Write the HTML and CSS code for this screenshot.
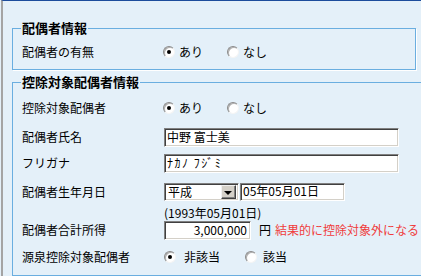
FILE: index.html
```html
<!DOCTYPE html>
<html lang="ja">
<head>
<meta charset="utf-8">
<link rel="stylesheet" href="styles.css">
</head>
<body>
<div class="page">
  <fieldset class="fs fs1">
    <legend class="lg">配偶者情報</legend>
    <div class="row">
      <span class="label">配偶者の有無</span>
      <span class="opt opt-a"><span class="radio on"></span>あり</span>
      <span class="opt"><span class="radio"></span>なし</span>
    </div>
  </fieldset>

  <fieldset class="fs fs2">
    <legend class="lg">控除対象配偶者情報</legend>
    <div class="row">
      <span class="label">控除対象配偶者</span>
      <span class="opt opt-a"><span class="radio on"></span>あり</span>
      <span class="opt"><span class="radio"></span>なし</span>
    </div>
    <div class="row mt9">
      <span class="label">配偶者氏名</span>
      <span class="txt w-long">中野 富士美</span>
    </div>
    <div class="row mt6">
      <span class="label">フリガナ</span>
      <span class="txt w-long kana">ﾅｶﾉ ﾌｼﾞﾐ</span>
    </div>
    <div class="row mt9">
      <span class="label">配偶者生年月日</span>
      <span class="sel">
        <span class="sel-val">平成</span>
        <span class="sel-btn"><span class="tri"></span></span>
      </span>
      <span class="txt w-date">05年05月01日</span>
    </div>
    <div class="row sub">
      <span class="label"></span>
      <span class="note">(1993年05月01日)</span>
    </div>
    <div class="row">
      <span class="label">配偶者合計所得</span>
      <span class="txt w-num">3,000,000</span>
      <span class="yen">円</span>
      <span class="warn">結果的に控除対象外になる</span>
    </div>
    <div class="row mt7">
      <span class="label">源泉控除対象配偶者</span>
      <span class="opt opt-b"><span class="radio on"></span>非該当</span>
      <span class="opt opt-c"><span class="radio"></span>該当</span>
    </div>
  </fieldset>
</div>
</body>
</html>
```

FILE: styles.css
```css
html, body {
  margin: 0;
  padding: 0;
}
body {
  background: #e4f0f9;
  font-family: "Noto Sans CJK JP", "Noto Sans", sans-serif;
  font-size: 12px;
  color: #000;
  overflow: hidden;
  width: 421px;
  height: 276px;
}
.page {
  height: 275px;
  margin-left: 1px;
  border-top: 1px solid #1c4c9c;
  border-left: 2px solid #a4a4a4;
  padding-left: 9px;
}
.fs {
  margin: 0;
  border: 1px solid #6aaee0;
  box-shadow: 1px 1px 0 #ffffff;
  min-width: 0;
  min-inline-size: 0;
  box-sizing: border-box;
}
.fs1 {
  width: 404px;
  margin-top: 19px;
  padding: 6px 0 7px 8px;
}
.fs2 {
  width: 420px;
  margin-top: 4px;
  padding: 8px 0 8px 8px;
}
.lg {
  font-size: 13px;
  font-weight: bold;
  line-height: 16px;
  height: 16px;
  padding: 0 1px;
  margin: 0;
}
.row {
  display: flex;
  align-items: center;
  height: 20px;
  line-height: 16px;
  white-space: nowrap;
}
.mt6 { margin-top: 6px; }
.mt7 { margin-top: 7px; }
.mt9 { margin-top: 9px; }
.row.sub {
  height: 14px;
  margin-top: 4px;
}
.label {
  width: 143px;
  padding-left: 1px;
  box-sizing: border-box;
  flex: none;
}
.opt {
  display: flex;
  align-items: center;
  gap: 4px;
  flex: none;
}
.opt-a {
  width: 64px;
  margin-left: -1px;
}
.opt-b {
  width: 81px;
  gap: 8px;
}
.opt-c {
  gap: 6px;
}
.radio {
  position: relative;
  width: 12px;
  height: 12px;
  box-sizing: border-box;
  border-radius: 50%;
  border: 1px solid;
  border-color: #8a8a8a #f4f4f4 #f4f4f4 #8a8a8a;
  background: #fff;
  box-shadow: inset 1px 1px 0 #b0b0b0;
  flex: none;
}
.radio.on::after {
  content: "";
  position: absolute;
  left: 3px;
  top: 3px;
  width: 4px;
  height: 4px;
  border-radius: 50%;
  background: #000;
}
.txt {
  display: block;
  box-sizing: border-box;
  height: 19px;
  line-height: 15px;
  padding: 0 2px;
  background: #fff;
  border: 1px solid;
  border-color: #808080 #ffffff #ffffff #808080;
  box-shadow: inset 1px 1px 0 #404040, inset -1px -1px 0 #d4d0c8;
  overflow: hidden;
  flex: none;
}
.kana {
  letter-spacing: 1.5px;
}
.w-long { width: 235px; }
.w-date {
  width: 105px;
  height: 18px;
  margin-left: 1px;
  line-height: 14px;
}
.w-num {
  width: 87px;
  text-align: right;
  padding-right: 3px;
}
.sel {
  display: flex;
  align-items: center;
  justify-content: space-between;
  box-sizing: border-box;
  width: 75px;
  height: 18px;
  background: #fff;
  border: 1px solid;
  border-color: #808080 #ffffff #ffffff #808080;
  box-shadow: inset 1px 1px 0 #404040, inset -1px -1px 0 #d4d0c8;
  padding: 2px;
  flex: none;
}
.sel-val {
  line-height: 14px;
  padding-left: 1px;
}
.sel-btn {
  display: flex;
  align-items: center;
  justify-content: center;
  box-sizing: border-box;
  width: 15px;
  height: 14px;
  background: #d4d0c8;
  border: 1px solid;
  border-color: #f0f0f0 #404040 #404040 #f0f0f0;
  box-shadow: inset -1px -1px 0 #808080;
}
.tri {
  width: 0;
  height: 0;
  border-left: 4px solid transparent;
  border-right: 4px solid transparent;
  border-top: 4px solid #000;
  margin: 1px 1px 0 0;
}
.note {
  line-height: 14px;
}
.yen {
  margin-left: 8px;
}
.warn {
  margin-left: 4px;
  color: #f03c3c;
}
```
